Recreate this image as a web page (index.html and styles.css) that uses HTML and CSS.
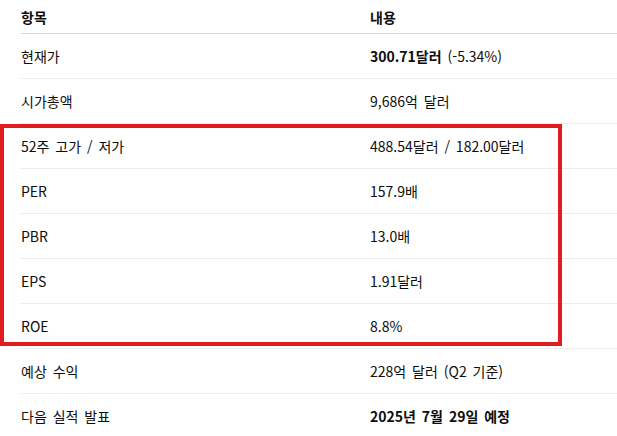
FILE: index.html
```html
<!DOCTYPE html>
<html lang="ko">
<head>
<meta charset="utf-8">
<link rel="stylesheet" href="styles.css">
</head>
<body>
<div class="wrap">
  <table class="data">
    <thead>
      <tr><th>항목</th><th>내용</th></tr>
    </thead>
    <tbody>
      <tr><td>현재가</td><td><strong>300.71달러</strong> (-5.34%)</td></tr>
      <tr><td>시가총액</td><td>9,686억 달러</td></tr>
      <tr><td>52주 고가 / 저가</td><td>488.54달러 / 182.00달러</td></tr>
      <tr><td>PER</td><td>157.9배</td></tr>
      <tr><td>PBR</td><td>13.0배</td></tr>
      <tr><td>EPS</td><td>1.91달러</td></tr>
      <tr><td>ROE</td><td>8.8%</td></tr>
      <tr><td>예상 수익</td><td>228억 달러 (Q2 기준)</td></tr>
      <tr><td>다음 실적 발표</td><td><strong>2025년 7월 29일 예정</strong></td></tr>
    </tbody>
  </table>
  <div class="highlight"></div>
</div>
</body>
</html>
```
FILE: styles.css
```css
html, body {
  margin: 0;
  padding: 0;
  background: #ffffff;
}
body {
  font-family: "Noto Sans CJK KR", "Noto Sans", sans-serif;
  font-size: 14px;
  color: #0d0d0d;
  overflow: hidden;
  word-spacing: 2px;
}
.wrap {
  position: relative;
  width: 617px;
  height: 436px;
}
.data {
  margin-left: 21px;
  width: 620px;
  border-collapse: collapse;
  table-layout: fixed;
}
.data th, .data td {
  text-align: left;
  padding: 0;
  vertical-align: middle;
}
.data th:first-child, .data td:first-child {
  width: 349px;
}
.data th {
  font-weight: 700;
  height: 33px;
  border-bottom: 1px solid #d6d6d6;
  line-height: 1;
}
.data td {
  height: 44px;
  border-bottom: 1px solid #ececec;
  line-height: 1;
}
.data strong {
  font-weight: 700;
}
.highlight {
  position: absolute;
  left: 0;
  top: 124px;
  width: 562px;
  height: 222px;
  box-sizing: border-box;
  border: 4px solid #e21d1f;
}
```
